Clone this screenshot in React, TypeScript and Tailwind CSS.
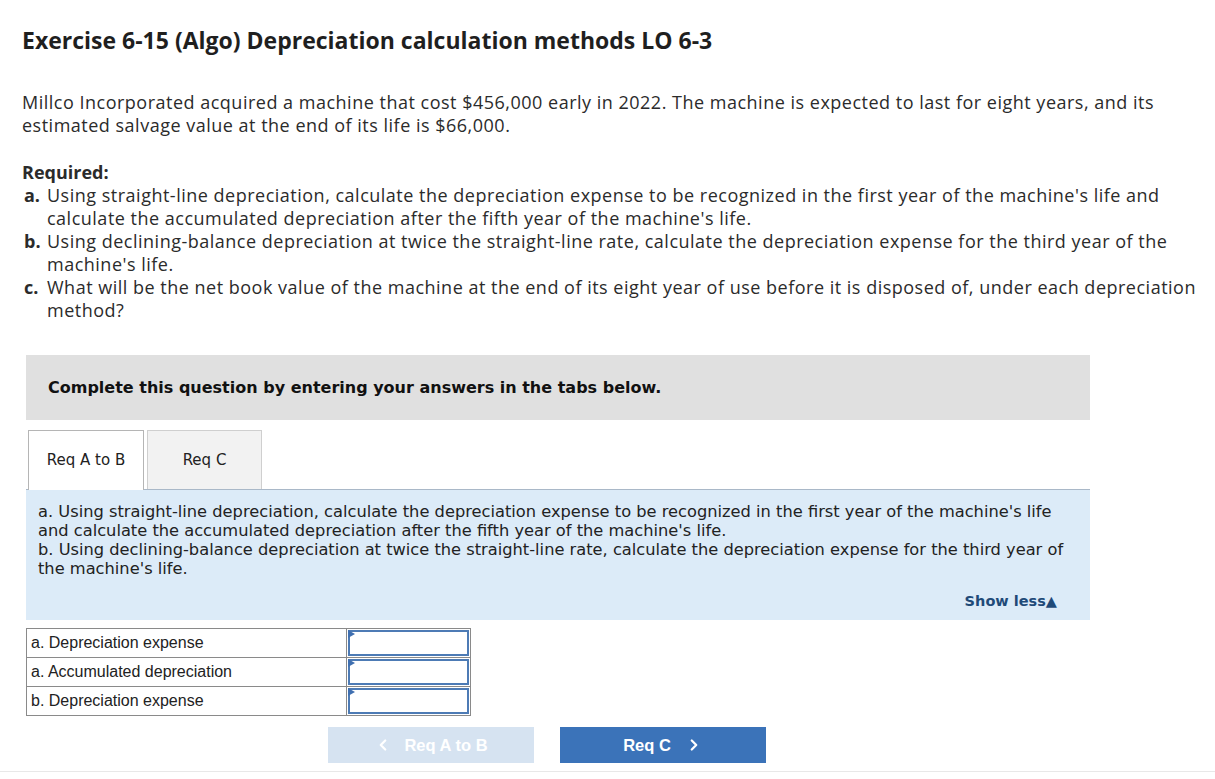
import React from 'react';
import { ChevronLeft, ChevronRight } from 'lucide-react';

const rows = ['a. Depreciation expense', 'a. Accumulated depreciation', 'b. Depreciation expense'];

const App: React.FC = () => {
    return (
        <div className="w-[1215px] h-[779px] bg-white overflow-hidden text-[#222]" style={{ fontFamily: '"Open Sans", Lato, sans-serif' }}>
            <div className="px-[22px] pt-[25px]">
                <h1 className="text-[23px] font-bold text-[#1f1f1f] leading-[30px]">Exercise 6-15 (Algo) Depreciation calculation methods LO 6-3</h1>

                <p className="mt-[36px] text-[18px] leading-[23px] tracking-[0.5px] text-[#2b2b2b]">
                    Millco Incorporated acquired a machine that cost $456,000 early in 2022. The machine is expected to last for eight years, and its estimated salvage value at the end of its life is $66,000.
                </p>

                <div className="mt-[24px] text-[18px] leading-[23px] tracking-[0.5px] text-[#2b2b2b] -mr-[4px]">
                    <p className="font-bold tracking-normal">Required:</p>
                    <div className="flex pl-[2px]">
                        <span className="font-bold w-[23px] shrink-0 tracking-normal">a.</span>
                        <span>Using straight-line depreciation, calculate the depreciation expense to be recognized in the first year of the machine's life and calculate the accumulated depreciation after the fifth year of the machine's life.</span>
                    </div>
                    <div className="flex pl-[2px]">
                        <span className="font-bold w-[23px] shrink-0 tracking-normal">b.</span>
                        <span>Using declining-balance depreciation at twice the straight-line rate, calculate the depreciation expense for the third year of the machine's life.</span>
                    </div>
                    <div className="flex pl-[2px]">
                        <span className="font-bold w-[23px] shrink-0 tracking-normal">c.</span>
                        <span>What will be the net book value of the machine at the end of its eight year of use before it is disposed of, under each depreciation method?</span>
                    </div>
                </div>
            </div>

            <div className="ml-[26px] w-[1064px]">
                <div className="mt-[33px] h-[65px] bg-[#e0e0e0] flex items-center pl-[22px]">
                    <p className="text-[16px] font-bold text-[#111]" style={{ fontFamily: '"DejaVu Sans", Verdana, sans-serif' }}>Complete this question by entering your answers in the tabs below.</p>
                </div>

                <div className="mt-[10px] flex items-end h-[60px] border-b border-[#a9b8c8] pl-[2px] gap-[3px]" style={{ fontFamily: '"DejaVu Sans", Verdana, sans-serif' }}>
                    <div className="w-[116px] h-[60px] border border-[#b5b5b5] border-b-0 bg-white flex items-center justify-center text-[15px] text-[#222] -mb-px">Req A to B</div>
                    <div className="w-[115px] h-[59px] border border-[#cfcfcf] border-b-0 bg-[#f2f2f2] flex items-center justify-center text-[15px] text-[#222]">Req C</div>
                </div>

                <div className="bg-[#dcebf8] h-[130px] pl-[12px] pr-[20px] pt-[12px] text-[16.25px] leading-[19px] text-[#222]" style={{ fontFamily: '"DejaVu Sans", Verdana, sans-serif' }}>
                    <p>a. Using straight-line depreciation, calculate the depreciation expense to be recognized in the first year of the machine's life and calculate the accumulated depreciation after the fifth year of the machine's life.</p>
                    <p>b. Using declining-balance depreciation at twice the straight-line rate, calculate the depreciation expense for the third year of the machine's life.</p>
                    <div className="flex justify-end pr-[13px] mt-[14px]">
                        <span className="text-[14.5px] font-bold text-[#1f4a78]">Show less▲</span>
                    </div>
                </div>

                <table className="mt-[8px] border-collapse text-[16px] text-[#222]" style={{ fontFamily: '"Liberation Sans", Arial, sans-serif' }}>
                    <tbody>
                        {rows.map((r, i) => (
                            <tr key={i} className="h-[29px]">
                                <td className="w-[320px] border border-[#8a8a8a] px-[4px] py-0">{r}</td>
                                <td className="w-[124px] border border-[#8a8a8a] p-[1px] relative">
                                    <div className="h-[26px] border-2 border-[#4d7bb5] bg-white"></div>
                                    <span className="absolute left-[1px] top-[1px] w-0 h-0 border-t-[4px] border-b-[4px] border-l-[7px] border-t-transparent border-b-transparent border-l-[#3f6fb0]"></span>
                                </td>
                            </tr>
                        ))}
                    </tbody>
                </table>

                <div className="mt-[11px] flex pl-[302px] gap-[26px]" style={{ fontFamily: '"Liberation Sans", Arial, sans-serif' }}>
                    <div className="w-[206px] h-[36px] bg-[#d6e3f1] flex items-center justify-center text-[16.5px] font-bold text-white gap-[12px]">
                        <ChevronLeft size={18} strokeWidth={3} /><span>Req A to B</span>
                    </div>
                    <div className="w-[206px] h-[36px] bg-[#3b73b9] flex items-center justify-center text-[16.5px] font-bold text-white gap-[14px]">
                        <span>Req C</span><ChevronRight size={18} strokeWidth={3} />
                    </div>
                </div>
            </div>
            <div className="mt-[8px] border-t border-[#e8e8e8]"></div>
        </div>
    );
};

export default App;
